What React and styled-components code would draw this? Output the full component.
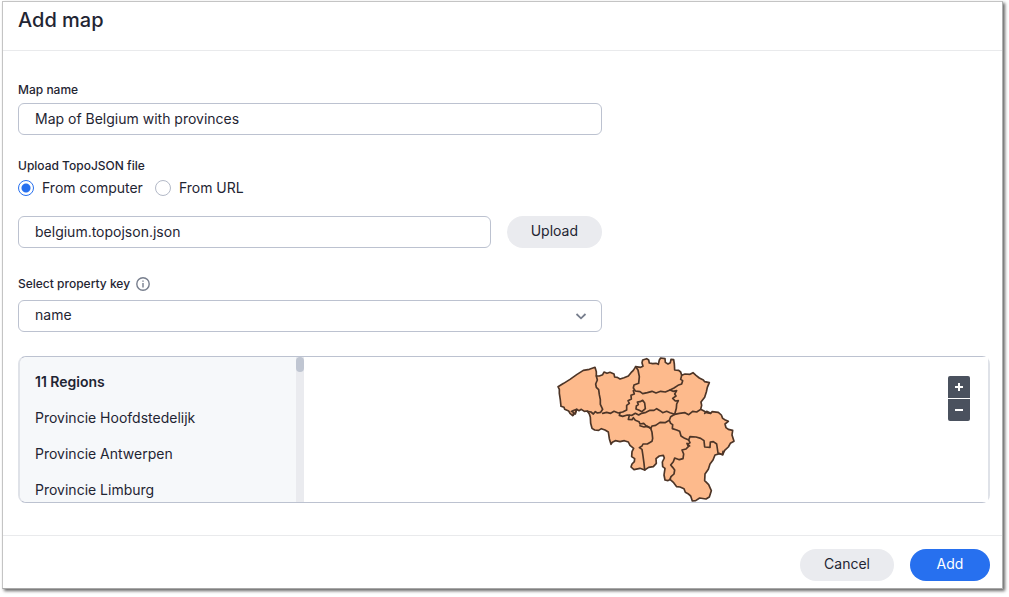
import React, { useState } from 'react';
import styled, { createGlobalStyle } from 'styled-components';

const GlobalStyle = createGlobalStyle`
  * {
    box-sizing: border-box;
  }

  body {
    margin: 0;
    background-color: white;
    color: #1f2533;
    font-family: Inter, 'Liberation Sans', sans-serif;
    font-size: 14px;
    line-height: 20px;
  }

  input,
  select,
  button {
    font: inherit;
    color: inherit;
  }
`;

const Dialog = styled.form`
  margin: 1px 6px 8px 2px;
  border: 1px solid #c4c4c4;
  border-right-color: #b0b0b0;
  border-bottom-color: #a8a8a8;
  background-color: white;
  box-shadow: 2px 2px 3px rgba(0, 0, 0, 0.6);
`;

const Header = styled.header`
  height: 49px;
  padding: 4px 15px;
  border-bottom: 1px solid #e9eaec;
`;

const Title = styled.h1`
  margin: 0;
  font-size: 20px;
  line-height: 28px;
  font-weight: 500;
`;

const Content = styled.div`
  padding: 31px 12px 32px 15px;
`;

const Fields = styled.div`
  display: flex;
  flex-direction: column;
  max-width: 584px;
`;

const Field = styled.div`
  display: flex;
  flex-direction: column;
  gap: ${({ $gap }) => $gap || 5}px;
  margin-bottom: ${({ $space }) => $space || 24}px;
`;

const Label = styled.label`
  display: flex;
  align-items: center;
  gap: 6px;
  font-size: 12px;
  line-height: 16px;
  font-weight: 500;
`;

const RadioSet = styled.fieldset`
  display: flex;
  flex-direction: column;
  margin: 0 0 18px;
  padding: 0;
  border: 0;
`;

const Legend = styled.legend`
  padding: 0;
  margin-bottom: 4px;
  font-size: 12px;
  line-height: 16px;
  font-weight: 500;
`;

const RadioRow = styled.div`
  display: flex;
  gap: 12px;
`;

const RadioLabel = styled.label`
  display: flex;
  align-items: center;
  gap: 8px;
`;

const Radio = styled.input`
  appearance: none;
  width: 16px;
  height: 16px;
  margin: 0;
  border: 1px solid #b3b9c7;
  border-radius: 50%;
  background-color: white;

  &:checked {
    border-color: #2770ef;
    background: radial-gradient(circle, #2770ef 4px, white 5px);
  }
`;

const TextInput = styled.input`
  flex: 1;
  min-width: 0;
  height: 32px;
  min-height: 32px;
  padding: 0 16px 2px;
  border: 1px solid #bcc2d0;
  border-radius: 6px;
  background-color: white;
  outline: none;
`;

const UploadRow = styled.div`
  display: flex;
  gap: 16px;
  margin-bottom: 28px;
`;

const Button = styled.button`
  height: 32px;
  min-width: 80px;
  padding: 0 24px 2px;
  border: 0;
  border-radius: 16px;
  background-color: ${({ $primary }) => ($primary ? '#2770ef' : '#eaebef')};
  color: ${({ $primary }) => ($primary ? 'white' : '#1f2533')};
`;

const SelectBox = styled.div`
  position: relative;
`;

const Select = styled.select`
  appearance: none;
  display: block;
  width: 100%;
  height: 32px;
  padding: 0 40px 2px 16px;
  border: 1px solid #bcc2d0;
  border-radius: 6px;
  background-color: white;
`;

const Chevron = styled.svg`
  position: absolute;
  top: 8px;
  right: 13px;
  pointer-events: none;
`;

const Preview = styled.section`
  display: flex;
  height: 147px;
  border: 1px solid #bcc2d0;
  border-left: 2px solid #dfe2e8;
  border-right: 2px solid #dfe2e8;
  border-radius: 8px;
`;

const RegionPane = styled.div`
  display: flex;
  flex: 0 0 284px;
  background-color: #f6f8fa;
  border-radius: 7px 0 0 7px;
  overflow: hidden;
`;

const RegionScroll = styled.div`
  flex: 1;
  padding: 7px 15px 0;
  overflow: hidden;
`;

const RegionTitle = styled.h2`
  margin: 0;
  font-size: 14px;
  line-height: 36px;
  font-weight: 600;
`;

const RegionList = styled.ul`
  list-style: none;
  margin: 0;
  padding: 0;
`;

const Region = styled.li`
  line-height: 36px;
`;

const ScrollTrack = styled.div`
  width: 8px;
  background-color: #eaebef;
`;

const ScrollThumb = styled.div`
  height: 15px;
  border-radius: 4px;
  background-color: #c0c6d2;
`;

const MapPane = styled.div`
  position: relative;
  flex: 1;
  display: flex;
  justify-content: center;
  background-color: white;
`;

const ZoomControls = styled.div`
  position: absolute;
  top: 19px;
  right: 18px;
  display: flex;
  flex-direction: column;
  gap: 1px;
`;

const ZoomButton = styled.button`
  display: flex;
  align-items: center;
  justify-content: center;
  width: 22px;
  height: 22px;
  padding: 0;
  border: 0;
  border-radius: ${({ $bottom }) => ($bottom ? '0 0 2px 2px' : '2px 2px 0 0')};
  background-color: #4a515e;
`;

const Footer = styled.footer`
  display: flex;
  justify-content: flex-end;
  gap: 16px;
  padding: 13px 12px 7px;
  border-top: 1px solid #e9eaec;
`;

const regions = [
  'Provincie Hoofdstedelijk',
  'Provincie Antwerpen',
  'Provincie Limburg',
];

// outer shape of the country
const outline =
  'M24 110L41 100L60 88L80 74L100 61L118 58L135 52L139 65L139 78L148 78L158 74L162 66L171 70L180 67L192 72L194 81L202 82L210 87L222 83L235 78L243 68L250 61L257 50L272 52L279 49L276 38L278 30L290 26L296 30L298 39L308 41L318 40L325 43L328 30L332 24L345 26L346 37L354 42L361 38L363 28L371 29L373 42L374 60L386 61L392 66L395 76L405 72L420 73L429 68L438 76L448 84L460 90L464 95L478 98L472 112L469 126L464 142L453 156L455 166L452 178L462 183L470 188L482 190L486 185L505 187L514 195L518 205L526 210L535 214L525 222L528 233L535 238L548 241L546 255L552 274L541 280L535 291L524 301L518 314L509 311L495 315L489 330L480 342L475 358L465 372L464 392L476 404L484 422L478 441L468 447L449 444L437 452L427 453L422 438L414 431L406 427L402 416L390 411L380 410L371 398L360 388L354 392L345 390L342 375L345 355L338 350L337 336L343 324L340 316L328 318L318 326L319 340L310 350L296 352L284 360L270 355L252 359L243 351L246 342L253 335L254 326L245 320L246 305L251 295L240 286L235 276L223 272L210 275L196 272L187 277L183 283L178 266L175 246L165 240L154 236L146 241L134 240L126 235L122 220L121 202L118 192L112 183L103 184L94 178L87 182L80 178L76 188L68 197L60 190L56 183L44 178L42 172L33 169L31 150L28 130L28 118Z';

// province borders, drawn over the outline
const borders = [
  'M139 78L142 90L137 102L139 112L146 119L148 134L151 149L151 163L158 178L152 187L142 189L136 185L130 192L123 186L112 184',
  'M68 182L80 178L76 192M64 184L70 187L70 195',
  'M257 50L264 60L268 80L266 100L252 105L250 114L256 123L270 125L278 131L292 128L306 124L318 129L332 124L346 126L360 120L369 124L380 122L374 132L378 138L368 145L376 153L385 152L380 162L379 175L374 193',
  'M395 76L392 88L398 92L395 102L384 106L372 114L360 120',
  'M158 190L170 187L182 190L192 184L205 189L218 186L230 180L230 166L238 160L234 152L244 147L243 136L253 132L250 122',
  'M210 188L208 196L218 199L232 195L246 196L256 190L266 195L275 190L288 187L300 181L312 181L320 176L330 182L338 188L350 184L360 188L374 193L388 190L405 188L416 194L428 184L440 186L452 178',
  'M262 156L270 155L278 151L284 159L286 176L276 185L266 180L258 177L259 168L265 164Z',
  'M238 196L235 208L246 209L250 203L256 211L267 215L270 222L281 220L289 228L302 235L306 228L317 226L330 217L345 218L358 211L362 200L374 193M358 211L362 220L368 224L367 236L380 240L389 244L393 258L404 265L416 270L420 260L438 261L452 265L462 272L464 291L480 292L481 276L490 275L500 282L504 309L518 314L519 304',
  'M302 235L306 247L308 265L306 274L292 282L279 282L276 288L268 293L276 298L279 318L282 340L284 360',
  'M416 270L420 278L412 282L415 290L408 297L396 300L401 312L399 326L388 329L374 324L370 335L362 345L368 352L374 360L372 372L363 380L360 388',
  'M270 227L282 231L292 229L302 235M411 280L419 288M482 190L470 184L464 190',
];

const BelgiumMap = () => (
  <svg
    width="181"
    height="145"
    viewBox="18 21 543 435"
    stroke="#4d3527"
    strokeWidth="5"
    strokeLinejoin="round"
    strokeLinecap="round"
    role="img"
    aria-label="Belgium"
  >
    <path d={outline} fill="#fdba8c" />
    {borders.map((d) => (
      <path key={d} d={d} fill="none" />
    ))}
  </svg>
);

const InfoIcon = () => (
  <svg width="14" height="14" viewBox="0 0 14 14" fill="none" stroke="#777e8d">
    <circle cx="7" cy="7" r="6.2" strokeWidth="1.4" />
    <path d="M7 6v4.5M7 3.4v1.3" strokeWidth="1.4" />
  </svg>
);

const App = () => {
  const [mapName, setMapName] = useState('Map of Belgium with provinces');
  const [source, setSource] = useState('computer');

  return (
    <>
      <GlobalStyle />
      <Dialog onSubmit={(e) => e.preventDefault()}>
        <Header>
          <Title>Add map</Title>
        </Header>

        <Content>
          <Fields>
            <Field $space={23}>
              <Label htmlFor="map-name">Map name</Label>
              <TextInput
                id="map-name"
                value={mapName}
                onChange={(e) => setMapName(e.target.value)}
              />
            </Field>

            <RadioSet>
              <Legend>Upload TopoJSON file</Legend>
              <RadioRow>
                <RadioLabel>
                  <Radio
                    type="radio"
                    name="source"
                    checked={source === 'computer'}
                    onChange={() => setSource('computer')}
                  />
                  From computer
                </RadioLabel>
                <RadioLabel>
                  <Radio
                    type="radio"
                    name="source"
                    checked={source === 'url'}
                    onChange={() => setSource('url')}
                  />
                  From URL
                </RadioLabel>
              </RadioRow>
            </RadioSet>

            <UploadRow>
              <TextInput aria-label="TopoJSON file" value="belgium.topojson.json" readOnly />
              <Button type="button">Upload</Button>
            </UploadRow>

            <Field $gap={8}>
              <Label htmlFor="property-key">
                Select property key
                <InfoIcon />
              </Label>
              <SelectBox>
                <Select id="property-key" defaultValue="name">
                  <option value="name">name</option>
                </Select>
                <Chevron width="16" height="16" viewBox="0 0 16 16" fill="none">
                  <path d="M3.5 6L8 10.3L12.5 6" stroke="#777e8d" strokeWidth="1.8" />
                </Chevron>
              </SelectBox>
            </Field>
          </Fields>

          <Preview>
            <RegionPane>
              <RegionScroll>
                <RegionTitle>11 Regions</RegionTitle>
                <RegionList>
                  {regions.map((region) => (
                    <Region key={region}>{region}</Region>
                  ))}
                </RegionList>
              </RegionScroll>
              <ScrollTrack>
                <ScrollThumb />
              </ScrollTrack>
            </RegionPane>
            <MapPane>
              <BelgiumMap />
              <ZoomControls>
                <ZoomButton type="button" aria-label="Zoom in">
                  <svg width="8" height="8" viewBox="0 0 8 8" stroke="white" strokeWidth="2">
                    <path d="M4 0v8M0 4h8" />
                  </svg>
                </ZoomButton>
                <ZoomButton type="button" aria-label="Zoom out" $bottom>
                  <svg width="8" height="8" viewBox="0 0 8 8" stroke="white" strokeWidth="2">
                    <path d="M0 4h8" />
                  </svg>
                </ZoomButton>
              </ZoomControls>
            </MapPane>
          </Preview>
        </Content>

        <Footer>
          <Button type="button">Cancel</Button>
          <Button type="submit" $primary>
            Add
          </Button>
        </Footer>
      </Dialog>
    </>
  );
};

export default App;
